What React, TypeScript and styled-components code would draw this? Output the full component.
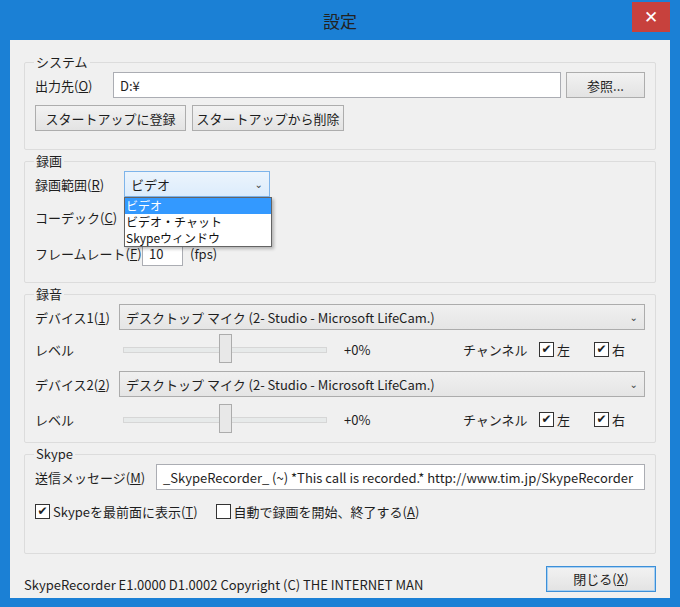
import styled, {createGlobalStyle} from "styled-components";

const Global = createGlobalStyle`
  html, body { margin: 0; padding: 0; background: #1b80d5; }
  body { font-family: "Noto Sans CJK JP", "Noto Sans", sans-serif; font-size: 13px; color: #1e1e1e; }
`;

const Window = styled.div`
  width: 680px;
  height: 607px;
  background: #1b80d5;
  box-sizing: border-box;
  padding: 0 10px 9px;
  display: flex;
  flex-direction: column;
`;

const TitleBar = styled.div`
  height: 40px;
  position: relative;
  display: flex;
  align-items: center;
  justify-content: center;
  font-size: 17px;
  color: #222;
`;

const CloseX = styled.div`
  position: absolute;
  right: 0;
  top: 2px;
  width: 38px;
  height: 30px;
  background: #c7413d;
  color: #fff;
  display: flex;
  align-items: center;
  justify-content: center;
  font-size: 17px;
  font-family: "DejaVu Sans", sans-serif;
`;

const Client = styled.div`
  flex: 1;
  background: #f0f0f0;
  padding: 14px 14px 0 14px;
  display: flex;
  flex-direction: column;
  gap: 3px;
`;

const Group = styled.fieldset<{ $h: number }>`
  margin: 0;
  height: ${(p) => p.$h}px;
  box-sizing: border-box;
  border: 1px solid #dcdcdc;
  border-radius: 2px;
  padding: 0 10px 0 10px;
  display: flex;
  flex-direction: column;
  position: relative;
`;

const Legend = styled.legend`
  padding: 0 2px;
  margin-left: -1px;
  font-size: 13px;
  line-height: 16px;
`;

const Row = styled.div<{ $h: number; $gap?: number }>`
  display: flex;
  align-items: center;
  height: ${(p) => p.$h}px;
  gap: ${(p) => p.$gap ?? 0}px;
`;

const Label = styled.span<{ $w: number }>`
  width: ${(p) => p.$w}px;
  flex-shrink: 0;
  white-space: nowrap;
`;

const TextBox = styled.div<{ $w?: number }>`
  height: 26px;
  box-sizing: border-box;
  border: 1px solid #abadb3;
  background: #fff;
  padding: 0 6px;
  display: flex;
  align-items: center;
  white-space: nowrap;
  overflow: hidden;
  ${(p) => (p.$w ? `width:${p.$w}px;` : "flex:1;")}
`;

const Button = styled.div<{ $w: number; $primary?: boolean }>`
  width: ${(p) => p.$w}px;
  height: 26px;
  box-sizing: border-box;
  border: 1px solid ${(p) => (p.$primary ? "#3c8fd8" : "#adadad")};
  background: linear-gradient(#f2f2f2, #e3e3e3);
  display: flex;
  align-items: center;
  justify-content: center;
  white-space: nowrap;
  box-shadow: ${(p) => (p.$primary ? "inset 0 0 0 1px #a8d0f2" : "none")};
`;

const Combo = styled.div<{ $w?: number; $active?: boolean }>`
  height: 26px;
  box-sizing: border-box;
  border: 1px solid ${(p) => (p.$active ? "#7eb4ea" : "#acacac")};
  background: ${(p) => (p.$active ? "linear-gradient(#ecf4fc, #dcecfc)" : "linear-gradient(#f0f0f0, #e5e5e5)")};
  display: flex;
  align-items: center;
  padding: 0 6px;
  justify-content: space-between;
  white-space: nowrap;
  ${(p) => (p.$w ? `width:${p.$w}px;` : "flex:1;")}
`;

const Arrow = styled.span`
  font-size: 10px;
  color: #444;
  font-family: "DejaVu Sans", sans-serif;
`;

const DropList = styled.div`
  position: absolute;
  left: 99px;
  top: 28px;
  width: 146px;
  border: 1px solid #646464;
  background: #fff;
  box-shadow: 2px 2px 3px rgba(0, 0, 0, 0.25);
  z-index: 2;
`;

const DropItem = styled.div<{ $sel?: boolean }>`
  height: 16px;
  line-height: 16px;
  padding-left: 1px;
  font-size: 12px;
  background: ${(p) => (p.$sel ? "#3399ff" : "#fff")};
  color: ${(p) => (p.$sel ? "#fff" : "#111")};
`;

const Slider = styled.div`
  width: 204px;
  height: 30px;
  position: relative;
  margin-left: 9px;
  &::before {
    content: "";
    position: absolute;
    left: 0;
    right: 0;
    top: 13px;
    height: 4px;
    background: #e7eaea;
    border: 1px solid #d6d6d6;
  }
`;

const Thumb = styled.div`
  position: absolute;
  left: 96px;
  top: 0;
  width: 11px;
  height: 27px;
  background: #e8e8e8;
  border: 1px solid #acacac;
`;

const Check = styled.span<{ $on?: boolean }>`
  width: 13px;
  height: 13px;
  border: 1px solid #333;
  background: #fff;
  display: inline-flex;
  align-items: center;
  justify-content: center;
  margin-right: 3px;
  font-size: 12px;
  line-height: 1;
  font-family: "DejaVu Sans", sans-serif;
  &::after { content: "${(p) => (p.$on ? "✔" : "")}"; }
`;

const CheckLabel = styled.span<{ $ml?: number }>`
  display: inline-flex;
  align-items: center;
  margin-left: ${(p) => p.$ml ?? 0}px;
  white-space: nowrap;
`;

const Footer = styled.div`
  display: flex;
  align-items: center;
  justify-content: space-between;
  margin-top: 6px;
`;

const u = (c: string) => <span style={{textDecoration: "underline"}}>{c}</span>;

function LevelRow() {
  return (
    <Row $h={34}>
      <Label $w={79}>レベル</Label>
      <Slider><Thumb /></Slider>
      <span style={{marginLeft: 17, width: 119}}>+0%</span>
      <span style={{width: 76}}>チャンネル</span>
      <CheckLabel><Check $on />左</CheckLabel>
      <CheckLabel $ml={24}><Check $on />右</CheckLabel>
    </Row>
  );
}

export default function App() {
  return (
    <Window>
      <Global />
      <TitleBar>
        設定
        <CloseX>✕</CloseX>
      </TitleBar>
      <Client>
        <Group $h={96}>
          <Legend>システム</Legend>
          <Row $h={30} $gap={5}>
            <Label $w={73}>出力先({u("O")})</Label>
            <TextBox>D:¥</TextBox>
            <Button $w={79}>参照...</Button>
          </Row>
          <Row $h={36} $gap={6}>
            <Button $w={151}>スタートアップに登録</Button>
            <Button $w={152}>スタートアップから削除</Button>
          </Row>
        </Group>
        <Group $h={130}>
          <Legend>録画</Legend>
          <Row $h={30}>
            <Label $w={89}>録画範囲({u("R")})</Label>
            <Combo $w={146} $active>ビデオ<Arrow>⌄</Arrow></Combo>
          </Row>
          <Row $h={36}>
            <Label $w={89}>コーデック({u("C")})</Label>
          </Row>
          <Row $h={36}>
            <Label $w={107}>フレームレート({u("F")})</Label>
            <TextBox $w={41}>10</TextBox>
            <span style={{marginLeft: 7}}>(fps)</span>
          </Row>
          <DropList>
            <DropItem $sel>ビデオ</DropItem>
            <DropItem>ビデオ・チャット</DropItem>
            <DropItem>Skypeウィンドウ</DropItem>
          </DropList>
        </Group>
        <Group $h={157}>
          <Legend>録音</Legend>
          <Row $h={30}>
            <Label $w={84}>デバイス1({u("1")})</Label>
            <Combo>デスクトップ マイク (2- Studio - Microsoft LifeCam.)<Arrow>⌄</Arrow></Combo>
          </Row>
          <LevelRow />
          <Row $h={36}>
            <Label $w={84}>デバイス2({u("2")})</Label>
            <Combo>デスクトップ マイク (2- Studio - Microsoft LifeCam.)<Arrow>⌄</Arrow></Combo>
          </Row>
          <LevelRow />
        </Group>
        <Group $h={108}>
          <Legend>Skype</Legend>
          <Row $h={30}>
            <Label $w={121}>送信メッセージ({u("M")})</Label>
            <TextBox>_SkypeRecorder_ (~) *This call is recorded.* http://www.tim.jp/SkypeRecorder</TextBox>
          </Row>
          <Row $h={38}>
            <CheckLabel><Check $on />Skypeを最前面に表示({u("T")})</CheckLabel>
            <CheckLabel $ml={18}><Check />自動で録画を開始、終了する({u("A")})</CheckLabel>
          </Row>
        </Group>
        <Footer>
          <span style={{marginTop: 12}}>SkypeRecorder E1.0000 D1.0002 Copyright (C) THE INTERNET MAN</span>
          <Button $w={110} $primary>閉じる({u("X")})</Button>
        </Footer>
      </Client>
    </Window>
  );
}
